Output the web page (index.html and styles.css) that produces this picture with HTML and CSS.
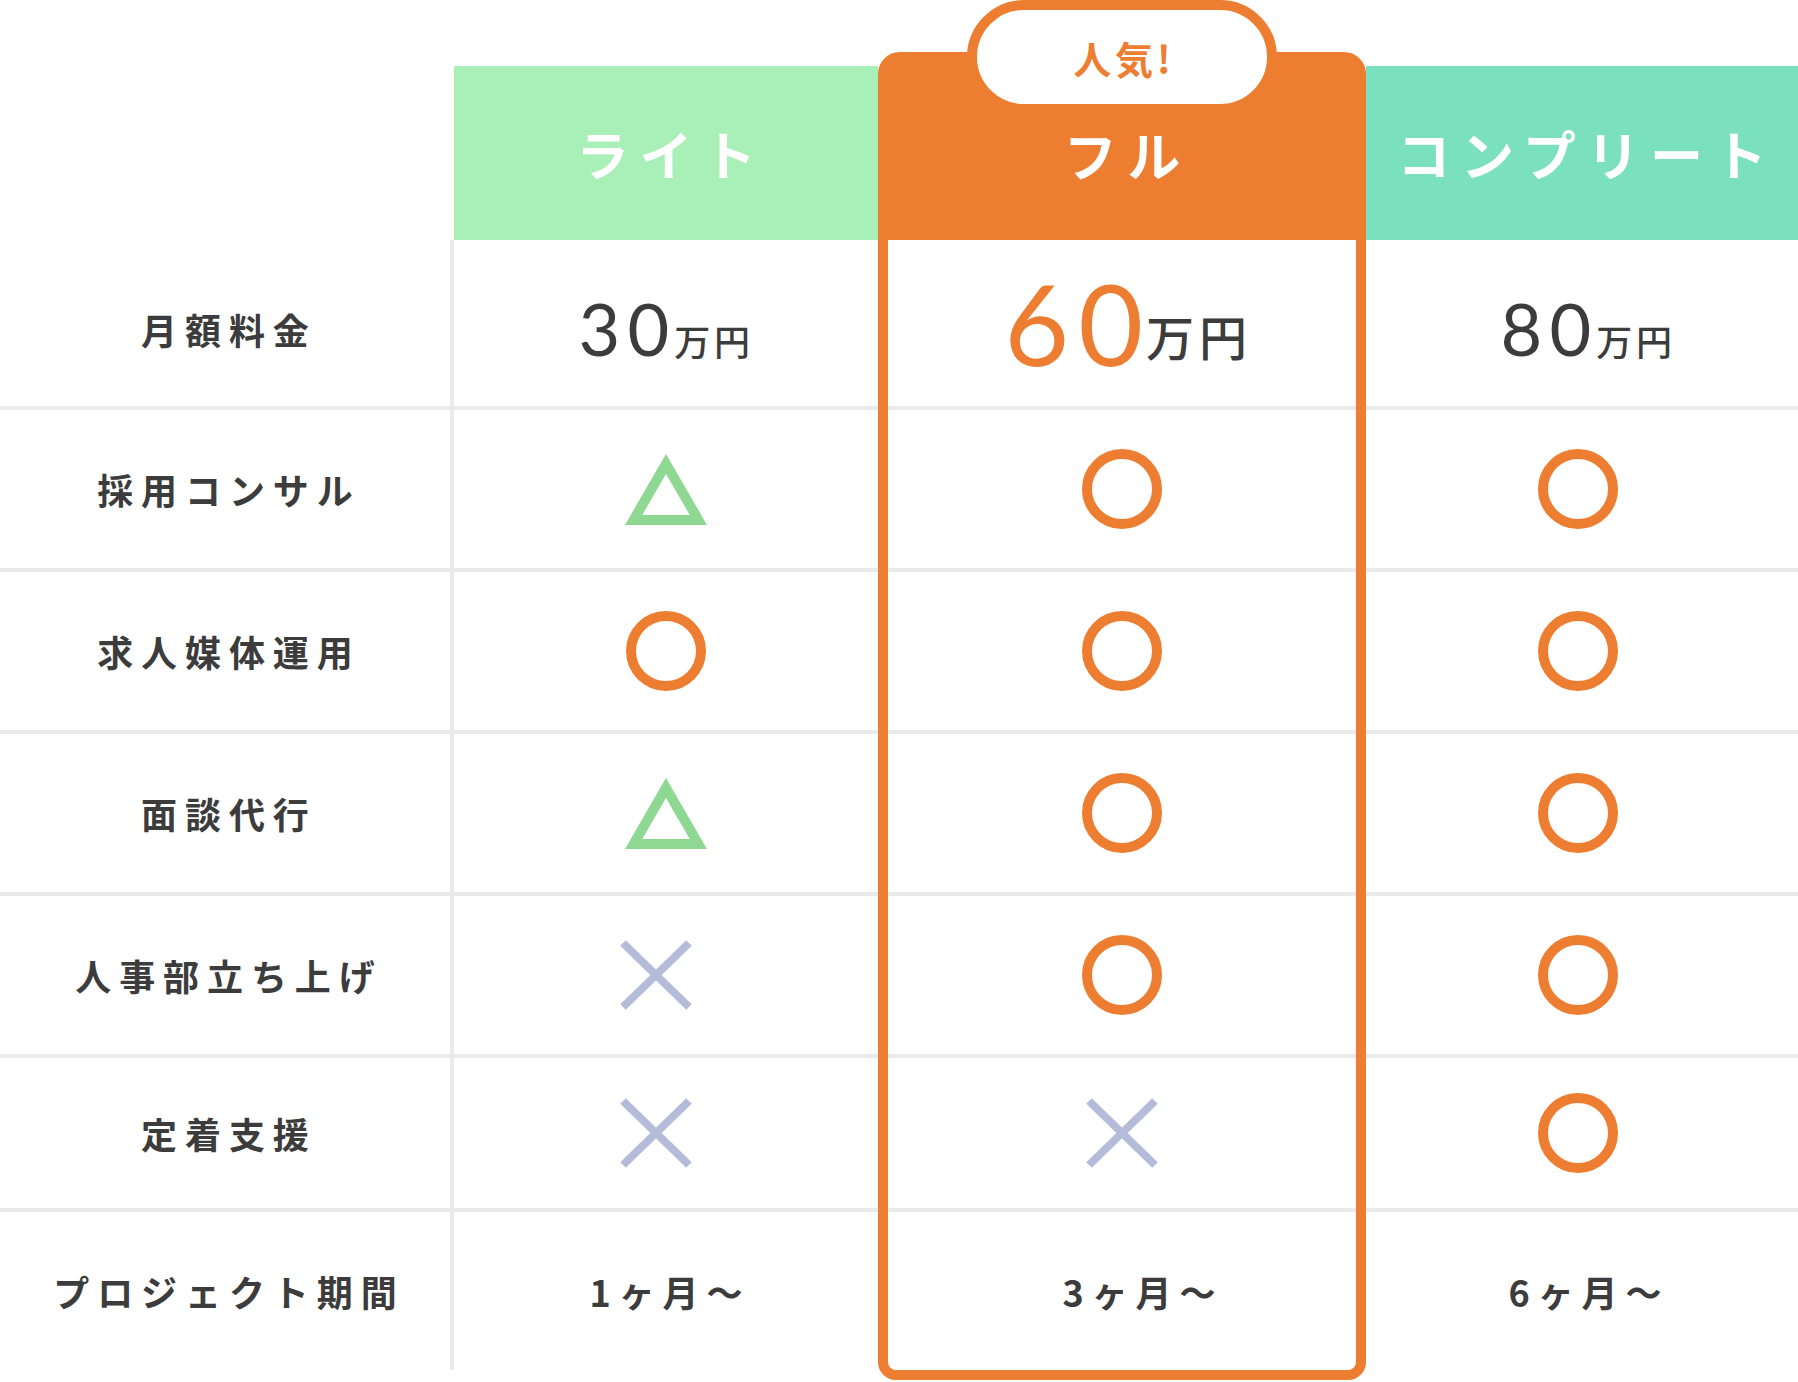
FILE: index.html
```html
<!DOCTYPE html>
<html lang="ja">
<head>
    <meta charset="UTF-8">
    <meta name="viewport" content="width=device-width, initial-scale=1.0">
    <title>料金プラン</title>
    <link rel="stylesheet" href="styles.css">
</head>
<body>

    <div class="plans">
        <!-- row labels -->
        <div class="col col-label">
            <div class="cell row-price"><span class="label">月額料金</span></div>
            <div class="cell"><span class="label">採用コンサル</span></div>
            <div class="cell"><span class="label">求人媒体運用</span></div>
            <div class="cell"><span class="label">面談代行</span></div>
            <div class="cell"><span class="label">人事部立ち上げ</span></div>
            <div class="cell row-short"><span class="label">定着支援</span></div>
            <div class="cell row-last"><span class="label">プロジェクト期間</span></div>
        </div>

        <!-- ライト -->
        <div class="col col-light">
            <div class="plan-head head-light">ライト</div>
            <div class="cell row-price">
                <span class="price"><span class="num">30</span><span class="unit">万円</span></span>
            </div>
            <div class="cell">
                <svg class="mark" width="82" height="71" viewBox="0 0 82 71"><polygon points="41,9.9 73.4,66 8.6,66" fill="none" stroke="#8fd894" stroke-width="10"/></svg>
            </div>
            <div class="cell">
                <svg class="mark" width="80" height="80" viewBox="0 0 80 80"><circle cx="40" cy="40" r="35" fill="none" stroke="#ed7e31" stroke-width="10"/></svg>
            </div>
            <div class="cell">
                <svg class="mark" width="82" height="71" viewBox="0 0 82 71"><polygon points="41,9.9 73.4,66 8.6,66" fill="none" stroke="#8fd894" stroke-width="10"/></svg>
            </div>
            <div class="cell">
                <svg class="mark mark-x" width="72" height="70" viewBox="0 0 72 70"><path d="M3 3 L69 67 M69 3 L3 67" stroke="#b4bcd9" stroke-width="8"/></svg>
            </div>
            <div class="cell row-short">
                <svg class="mark mark-x" width="72" height="70" viewBox="0 0 72 70"><path d="M3 3 L69 67 M69 3 L3 67" stroke="#b4bcd9" stroke-width="8"/></svg>
            </div>
            <div class="cell row-last"><span class="term">1ヶ月〜</span></div>
        </div>

        <!-- フル -->
        <div class="col col-full">
            <div class="badge">人気!</div>
            <div class="plan-head head-full">フル</div>
            <div class="cell row-price">
                <span class="price price-big"><span class="num">60</span><span class="unit">万円</span></span>
            </div>
            <div class="cell">
                <svg class="mark" width="80" height="80" viewBox="0 0 80 80"><circle cx="40" cy="40" r="35" fill="none" stroke="#ed7e31" stroke-width="10"/></svg>
            </div>
            <div class="cell">
                <svg class="mark" width="80" height="80" viewBox="0 0 80 80"><circle cx="40" cy="40" r="35" fill="none" stroke="#ed7e31" stroke-width="10"/></svg>
            </div>
            <div class="cell">
                <svg class="mark" width="80" height="80" viewBox="0 0 80 80"><circle cx="40" cy="40" r="35" fill="none" stroke="#ed7e31" stroke-width="10"/></svg>
            </div>
            <div class="cell">
                <svg class="mark" width="80" height="80" viewBox="0 0 80 80"><circle cx="40" cy="40" r="35" fill="none" stroke="#ed7e31" stroke-width="10"/></svg>
            </div>
            <div class="cell row-short">
                <svg class="mark" width="72" height="70" viewBox="0 0 72 70"><path d="M3 3 L69 67 M69 3 L3 67" stroke="#b4bcd9" stroke-width="8"/></svg>
            </div>
            <div class="cell row-last"><span class="term term-full">3ヶ月〜</span></div>
        </div>

        <!-- コンプリート -->
        <div class="col col-complete">
            <div class="plan-head head-complete">コンプリート</div>
            <div class="cell row-price">
                <span class="price price-right"><span class="num">80</span><span class="unit">万円</span></span>
            </div>
            <div class="cell">
                <svg class="mark" width="80" height="80" viewBox="0 0 80 80"><circle cx="40" cy="40" r="35" fill="none" stroke="#ed7e31" stroke-width="10"/></svg>
            </div>
            <div class="cell">
                <svg class="mark" width="80" height="80" viewBox="0 0 80 80"><circle cx="40" cy="40" r="35" fill="none" stroke="#ed7e31" stroke-width="10"/></svg>
            </div>
            <div class="cell">
                <svg class="mark" width="80" height="80" viewBox="0 0 80 80"><circle cx="40" cy="40" r="35" fill="none" stroke="#ed7e31" stroke-width="10"/></svg>
            </div>
            <div class="cell">
                <svg class="mark" width="80" height="80" viewBox="0 0 80 80"><circle cx="40" cy="40" r="35" fill="none" stroke="#ed7e31" stroke-width="10"/></svg>
            </div>
            <div class="cell row-short">
                <svg class="mark" width="80" height="80" viewBox="0 0 80 80"><circle cx="40" cy="40" r="35" fill="none" stroke="#ed7e31" stroke-width="10"/></svg>
            </div>
            <div class="cell row-last"><span class="term term-right">6ヶ月〜</span></div>
        </div>
    </div>

</body>
</html>
```

FILE: styles.css
```css
body {
    margin: 0;
    padding: 0;
    font-family: "Noto Sans CJK JP", "Noto Sans", sans-serif;
    color: #3c3c3c;
    background-color: #fff;
}

.plans {
    display: grid;
    grid-template-columns: 454px 424px 488px 432px;
    align-items: start;
}

.col {
    display: flex;
    flex-direction: column;
}

.col-label {
    padding-top: 240px;
}

.col-light,
.col-complete {
    padding-top: 66px;
}

.col-full {
    position: relative;
    margin-top: 52px;
    border: 10px solid #ed7e31;
    border-radius: 22px 22px 18px 18px;
}

.col-complete .cell {
    padding-right: 8px;
}

/* plan headers */
.plan-head {
    display: flex;
    align-items: center;
    justify-content: center;
    height: 174px;
    padding-left: 0.2em;
    box-sizing: border-box;
    color: #fff;
    font-size: 53px;
    font-weight: 700;
    letter-spacing: 0.2em;
}

.head-light {
    background-color: #a8efb8;
}

.head-full {
    height: 178px;
    padding-top: 6px;
    background-color: #ed7e31;
}

.head-complete {
    background-color: #7be0bd;
}

.badge {
    position: absolute;
    top: -62px;
    left: 50%;
    transform: translateX(-50%);
    display: flex;
    align-items: center;
    justify-content: center;
    width: 310px;
    height: 114px;
    padding-left: 0.1em;
    box-sizing: border-box;
    border: 10px solid #ed7e31;
    border-radius: 60px;
    background-color: #fff;
    color: #ed7e31;
    font-size: 38px;
    font-weight: 700;
    letter-spacing: 0.1em;
}

/* table cells */
.cell {
    display: flex;
    align-items: center;
    justify-content: center;
    height: 162px;
    box-sizing: border-box;
    border-bottom: 4px solid #eaeaea;
}

.row-price {
    height: 170px;
}

.col-label .row-price {
    padding-top: 12px;
}

.row-short {
    height: 154px;
}

.row-last {
    height: 158px;
    border-bottom: none;
}

.col-label .cell {
    border-right: 4px solid #eaeaea;
}

.label,
.term {
    padding-left: 0.22em;
    font-size: 36px;
    font-weight: 700;
    letter-spacing: 0.22em;
}

.term-full {
    margin-left: 34px;
}

.term-right {
    margin-left: 14px;
}

/* prices */
.price {
    display: block;
    padding-top: 12px;
    white-space: nowrap;
}

.num {
    font-family: "Lato", sans-serif;
    font-size: 72px;
    font-weight: 400;
    line-height: 1;
    letter-spacing: 0.1em;
}

.unit {
    margin-left: -2px;
    font-size: 36px;
    font-weight: 500;
    letter-spacing: 0.1em;
}

.price-big {
    margin-left: 12px;
    padding-top: 0;
}

.price-big .num {
    font-size: 112px;
    color: #ed7e31;
    letter-spacing: 0.08em;
}

.price-big .unit {
    margin-left: -6px;
    font-size: 48px;
    vertical-align: 10px;
}

.price-right {
    margin-left: 20px;
}

.mark {
    display: block;
}

.mark-x {
    margin-right: 20px;
}
```
